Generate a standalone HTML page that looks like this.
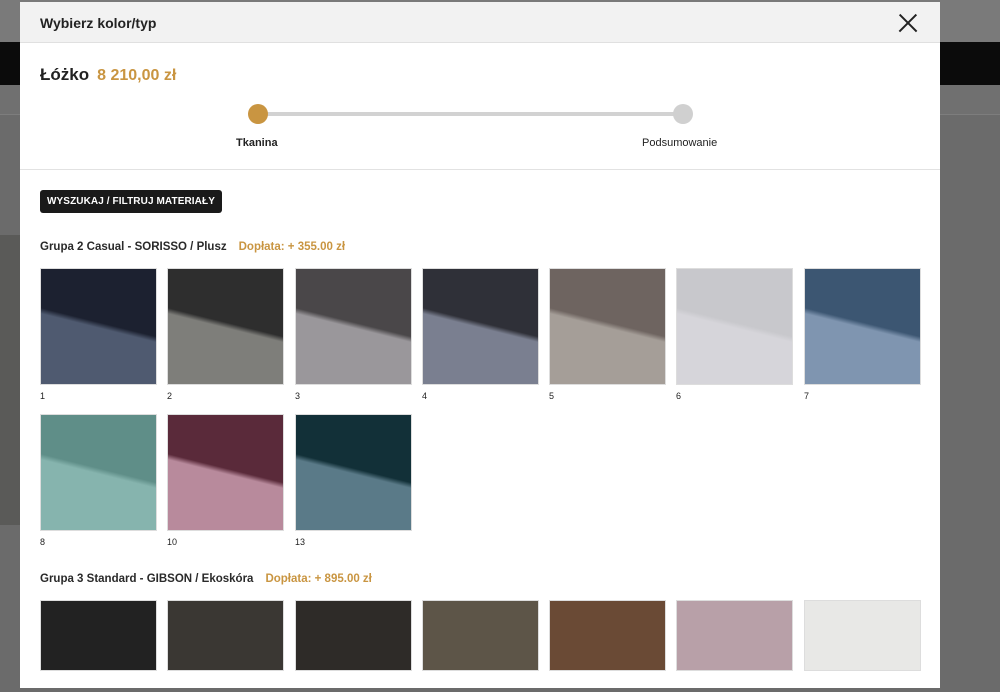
<!DOCTYPE html>
<html><head><meta charset="utf-8"><style>
*{margin:0;padding:0;box-sizing:border-box}
body{width:1000px;height:692px;overflow:hidden;background:#6b6b6b;font-family:"Liberation Sans",sans-serif;position:relative}
.bgtop{position:absolute;left:0;top:0;width:1000px;height:42px;background:#7a7a7a}
.nav{position:absolute;left:0;top:42px;width:1000px;height:43px;background:#0b0b0b}
.crumb{position:absolute;left:0;top:85px;width:1000px;height:30px;background:#707070;border-bottom:1px solid #7d7d7d}
.photo{position:absolute;left:0;top:235px;width:20px;height:290px;background:#5a5a58}
.modal{position:absolute;left:20px;top:2px;width:920px;height:686px;background:#fff;overflow:hidden}
.head{height:41px;background:#f2f2f2;border-bottom:1px solid #e0e0e0;position:relative}
.head h1{position:absolute;left:20px;top:13px;font-size:14px;font-weight:bold;color:#222}
.x{position:absolute;left:878px;top:11px;width:20px;height:20px}
.x:before,.x:after{content:"";position:absolute;left:-2px;top:9px;width:24px;height:2.4px;background:#222;transform:rotate(45deg)}
.x:after{transform:rotate(-45deg)}
.title{position:absolute;left:20px;top:63px;font-size:17px;font-weight:bold;color:#222}
.title span{color:#c99541;margin-left:8px;font-size:16px}
.line{position:absolute;left:238px;top:110px;width:425px;height:4px;background:#d2d2d2}
.dot{position:absolute;top:102px;width:20px;height:20px;border-radius:50%}
.lbl{position:absolute;top:135px;font-size:11px;color:#222}
.sep{position:absolute;left:0;top:167px;width:920px;height:1px;background:#e2e2e2}
.btn{position:absolute;left:20px;top:188px;background:#1a1a1a;color:#fff;font-size:10px;font-weight:bold;padding:6px 7px;border-radius:3px;letter-spacing:.1px}
.grp{position:absolute;left:20px;font-size:11.5px;font-weight:bold;color:#2a2a2a}
.grp span{color:#c99541;margin-left:12px}
.sw{position:absolute;width:117px;height:117px;border:1px solid #ddd}
.num{position:absolute;font-size:9px;color:#222}
</style></head><body>
<div class="bgtop"></div><div class="nav"></div><div class="crumb"></div><div class="photo"></div>
<div class="modal">
<div class="head"><h1>Wybierz kolor/typ</h1><div class="x"></div></div>
<div class="title">Łóżko<span>8 210,00 zł</span></div>
<div class="line"></div>
<div class="dot" style="left:228px;background:#c99541"></div>
<div class="dot" style="left:653px;background:#d0d0d0"></div>
<div class="lbl" style="left:216px;font-weight:bold">Tkanina</div>
<div class="lbl" style="left:622px">Podsumowanie</div>
<div class="sep"></div>
<div class="btn">WYSZUKAJ / FILTRUJ MATERIAŁY</div>
<div class="grp" style="top:239px">Grupa 2 Casual - SORISSO / Plusz<span>Dopłata: + 355.00 zł</span></div>
<div class="grp" style="top:571px">Grupa 3 Standard - GIBSON / Ekoskóra<span>Dopłata: + 895.00 zł</span></div>
<div id="s"></div>
</div>
<script>
var xs=[20,147,275,402,529,656,784];
var r1=[["#1c2130","#4f5a70","1"],["#2e2e2e","#7e7e7a","2"],["#4a4749","#9a979b","3"],["#2f3038","#7a7f90","4"],["#6e6460","#a59e98","5"],["#c8c8cc","#d6d5da","6"],["#3c5672","#7f95b0","7"]];
var r2=[["#5f8e88","#86b4ae","8"],["#5a2a3a","#b88a9c","10"],["#123038","#5a7a88","13"]];
var r3=["#222222","#3a3733","#2e2b28","#5d5548","#6a4a35","#b8a0a8","#e8e8e6"];
var h="";
function sw(x,y,a,b,n){h+='<div class="sw" style="left:'+x+'px;top:'+y+'px;background:linear-gradient(194deg,'+a+' 0,'+a+' 47%,'+b+' 51%,'+b+' 100%)"></div><div class="num" style="left:'+x+'px;top:'+(y+123)+'px">'+n+'</div>';}
r1.forEach(function(c,i){sw(xs[i],266,c[0],c[1],c[2]);});
r2.forEach(function(c,i){sw(xs[i],412,c[0],c[1],c[2]);});
r3.forEach(function(c,i){h+='<div class="sw" style="left:'+xs[i]+'px;top:598px;height:71px;background:'+c+'"></div>';});
document.getElementById("s").innerHTML=h;
</script>
</body></html>
